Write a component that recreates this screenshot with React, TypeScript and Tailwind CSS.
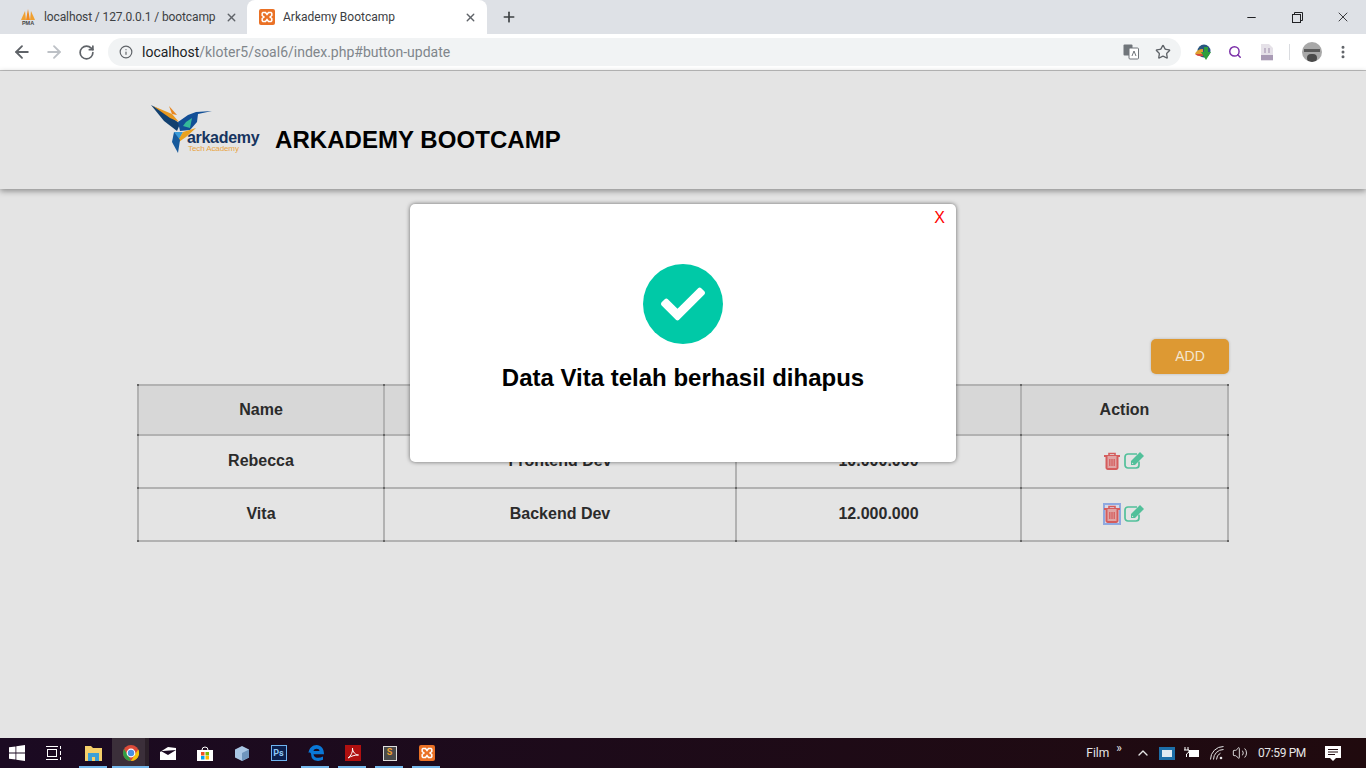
import { FaCheck } from 'react-icons/fa';
import { ArrowLeft, ArrowRight, RotateCw, Info, Star, Plus, X, Minus, MoreVertical, Search, ChevronUp, Volume2 } from 'lucide-react';

const rows = [
  { name: 'Rebecca', job: 'Frontend Dev', salary: '10.000.000', focused: false },
  { name: 'Vita', job: 'Backend Dev', salary: '12.000.000', focused: true },
];

function XamppIcon({ size = 16 }: { size?: number }) {
  return (
    <svg width={size} height={size} viewBox="0 0 16 16">
      <rect width="16" height="16" rx="2" fill="#ea7125" />
      <path d="M4 3.5h2.5L8 5.5l1.5-2H12l.8.8v2.2L11 8l1.800 1.500v2.200l-.8.800H9.500L8 10.500l-1.500 2H4l-.8-.8V9.500L5 8 3.200 6.500V4.300z" fill="none" stroke="#fff" strokeWidth="1.500" />
    </svg>
  );
}

function Logo() {
  return (
    <div className="relative w-[112px] h-[52px]">
      <svg width="64" height="50" viewBox="0 0 64 50" className="absolute left-0 top-0">
        <polygon points="1,1 18,10 30,20 27,27 14,17" fill="#12406f" />
        <polygon points="3,2 22,10 29,18 20,14" fill="#e8981f" />
        <polygon points="19,2 27,11 22,10" fill="#e8861f" />
        <polygon points="28,18 38,11 46,8 62,7 48,10 47,18 40,26 30,27" fill="#124f96" />
        <polygon points="36,18 42,14 40,24 33,22" fill="#35b99a" />
        <polygon points="24,28 33,28 27,40" fill="#3b9bd8" />
        <polygon points="33,28 46,24 36,33 26,40" fill="#e8a11f" />
        <polygon points="24,28 30,36 28,49 22,38" fill="#175a9c" />
      </svg>
      <span className="absolute left-[37px] top-[25px] text-[16px] leading-[18px] font-bold text-[#16345f] tracking-[-0.3px]">arkademy</span>
      <span className="absolute left-[38px] top-[40px] text-[8px] leading-[10px] text-[#e8a341] tracking-[-0.1px]">Tech Academy</span>
    </div>
  );
}

function TaskSlot({ children, mark = false, active = false }: { children: React.ReactNode; mark?: boolean; active?: boolean }) {
  return (
    <div className={`relative w-[37px] h-[30px] flex items-center justify-center ${active ? 'bg-[#3b2f3a]' : ''}`}>
      {children}
      {active && <div className="absolute right-0 top-0 bottom-0 w-[4px] bg-[#2b2029]" />}
      {mark && <div className={`absolute bottom-0 h-[2px] bg-[#76b9ed] ${active ? 'left-0 right-0' : 'left-[4px] right-[5px]'}`} />}
    </div>
  );
}

// dark dots where the table lines meet
function Cell({ children, right = false, bottom = false, head = false }: { children: React.ReactNode; right?: boolean; bottom?: boolean; head?: boolean }) {
  return (
    <td className="relative border-2 border-[#b2b2b2] text-center p-0">
      <i className="absolute left-[-2px] top-[-2px] w-[2px] h-[2px] bg-[#666]" />
      {right && <i className="absolute right-[-2px] top-[-2px] w-[2px] h-[2px] bg-[#666]" />}
      {bottom && <i className="absolute left-[-2px] bottom-[-2px] w-[2px] h-[2px] bg-[#666]" />}
      {bottom && right && <i className="absolute right-[-2px] bottom-[-2px] w-[2px] h-[2px] bg-[#666]" />}
      <div className={head ? '' : 'pb-[2px]'}>{children}</div>
    </td>
  );
}

export default function App() {
  return (
    <div className="relative w-[1366px] h-[768px] overflow-hidden flex flex-col bg-[#e4e4e4] font-['Liberation_Sans',Arial,sans-serif]">
      {/* tab strip */}
      <div className="h-[34px] bg-[#dee1e6] flex items-end shrink-0 relative">
        <div className="w-[247px] h-[34px] pl-[20px] pr-[9px] flex items-center">
          <svg width="16" height="16" viewBox="0 0 16 16" className="shrink-0">
            <polygon points="1,11 5,2 6,11" fill="#f0a030" />
            <polygon points="6,11 8,0 10,11" fill="#f08a20" />
            <polygon points="10,11 11,2 15,11" fill="#f0a030" />
            <text x="8" y="15.500" textAnchor="middle" fontSize="5.500" fontWeight="700" fill="#444" fontFamily="Liberation Sans">PMA</text>
          </svg>
          <span className="ml-[8px] text-[12px] text-[#3c4043] whitespace-nowrap font-['Roboto',sans-serif] tracking-[-0.12px]">localhost / 127.0.0.1 / bootcamp</span>
          <X size={13} className="ml-auto text-[#5f6368]" strokeWidth={2.500} />
        </div>
        <div className="w-[240px] h-[34px] bg-white rounded-t-[8px] pl-[12px] pr-[10px] flex items-center">
          <XamppIcon />
          <span className="ml-[8px] text-[12px] text-[#3c4043] font-['Roboto',sans-serif]">Arkademy Bootcamp</span>
          <X size={13} className="ml-auto text-[#5f6368]" strokeWidth={2.500} />
        </div>
        <Plus size={16} strokeWidth={2.500} className="ml-[14px] mb-[9px] text-[#3c4043]" />
        <div className="ml-auto h-[34px] flex items-center text-[#202124]">
          <div className="w-[46px] flex justify-center"><Minus size={13} /></div>
          <div className="w-[46px] flex justify-center">
            <svg width="11" height="11" viewBox="0 0 11 11" fill="none" stroke="#202124"><rect x="0.500" y="2.500" width="8" height="8" /><path d="M2.500 2.500v-2h8v8h-2" /></svg>
          </div>
          <div className="w-[46px] flex justify-center"><X size={16} strokeWidth={1.300} /></div>
        </div>
      </div>

      {/* toolbar */}
      <div className="h-[37px] bg-white border-b border-[#c0c0c0] flex items-center shrink-0">
        <ArrowLeft size={20} className="ml-[12px] text-[#5f6368]" strokeWidth={2.200} />
        <ArrowRight size={20} className="ml-[12px] text-[#bdc1c6]" strokeWidth={2.200} />
        <RotateCw size={17} className="ml-[14px] text-[#5f6368]" strokeWidth={2.400} />
        <div className="ml-[13px] w-[1073px] h-[28px] rounded-full bg-[#f1f3f4] flex items-center pl-[11px] pr-[10px]">
          <Info size={14} className="text-[#5f6368]" strokeWidth={2} />
          <span className="ml-[9px] text-[14px] text-[#80868b] font-['Roboto',sans-serif]"><span className="text-[#202124]">localhost</span>/kloter5/soal6/index.php#button-update</span>
          <svg width="16" height="16" viewBox="0 0 16 16" className="ml-auto mr-[16px]">
            <rect x="0.500" y="0.500" width="9" height="11" rx="1" fill="#70757a" />
            <rect x="6" y="4" width="9.500" height="11" rx="1" fill="#fff" stroke="#70757a" />
            <path d="M9 12l2-5 2 5" fill="none" stroke="#70757a" />
          </svg>
          <Star size={16} className="text-[#5f6368]" strokeWidth={2} />
        </div>
        <svg width="18" height="16" viewBox="0 0 18 16" className="ml-[13px]">
          <circle cx="10" cy="7" r="6.500" fill="#27557f" />
          <path d="M1 10a8 6 0 0 1 8-5v6z" fill="#e0a030" />
          <path d="M1 10a7 4 0 0 0 8 2v-2z" fill="#d24a3a" />
          <path d="M10 3h4v5h3l-5 8-5-8h3z" fill="#2f9e3c" />
        </svg>
        <Search size={14} strokeWidth={2.500} className="ml-[16px] text-[#7b2fa8]" />
        <svg width="14" height="17" viewBox="0 0 14 17" className="ml-[18px]">
          <path d="M1 0h8l4 4v13H1z" fill="#e5e1e8" />
          <rect x="1" y="11" width="12" height="5" fill="#a99bb5" />
          <path d="M5 4v5M9 4v5" stroke="#a99bb5" strokeWidth="1.200" />
        </svg>
        <div className="ml-[15px] w-px h-[16px] bg-[#dadce0]" />
        <div className="ml-[12px] w-[20px] h-[20px] rounded-full bg-[#a8a8a8] overflow-hidden flex flex-col items-center">
          <div className="mt-[7px] w-[16px] h-[3px] bg-[#5a5a5a]" />
          <div className="mt-[2px] w-[10px] h-[8px] rounded-full bg-[#4a4a4a]" />
        </div>
        <MoreVertical size={16} strokeWidth={2.500} className="ml-[13px] text-[#5f6368]" />
      </div>

      {/* page */}
      <div className="flex-1 relative flex flex-col">
        <header className="h-[118px] bg-[#e4e4e4] shadow-[0_2px_6px_rgba(0,0,0,0.4)] pl-[150px] pt-[33px] flex items-start">
          <Logo />
          <h1 className="ml-[13px] mt-[22px] text-[24px] leading-[28px] font-bold text-black tracking-[0.05px]">ARKADEMY BOOTCAMP</h1>
        </header>

        <main className="pl-[137px] pt-[150px] w-[1229px]">
          <div className="flex justify-end">
            <button className="w-[78px] h-[35px] rounded-[5px] bg-[#dd9933] text-[14px] text-[#f4e6d0] shadow-[0_0_3px_rgba(0,0,0,0.2)]">ADD</button>
          </div>
          <table className="mt-[10px] w-[1092px] border-collapse table-fixed text-[16px] font-bold text-[#2b2b2b]">
            <colgroup>
              <col className="w-[246px]" />
              <col className="w-[352px]" />
              <col className="w-[285px]" />
              <col className="w-[207px]" />
            </colgroup>
            <thead>
              <tr className="h-[50px] bg-[#d7d7d7]">
                <Cell head>Name</Cell>
                <Cell head>Job</Cell>
                <Cell head>Salary</Cell>
                <Cell head right>Action</Cell>
              </tr>
            </thead>
            <tbody>
              {rows.map((r, i) => (
                <tr key={r.name} className="h-[53px]">
                  <Cell bottom={i === 1}>{r.name}</Cell>
                  <Cell bottom={i === 1}>{r.job}</Cell>
                  <Cell bottom={i === 1}>{r.salary}</Cell>
                  <Cell right bottom={i === 1}>
                    <div className="flex justify-center items-center gap-[3px] pr-[1px]">
                      <span className={`w-[18px] h-[22px] flex items-center justify-center ${r.focused ? 'border-2 border-[#8fa9e0] bg-[#d9d9e6]' : ''}`}>
                        <svg width="16" height="18" viewBox="0 0 16 18" className="shrink-0" fill="none" stroke="#d55c5c">
                          <path d="M0 4h16" strokeWidth="2" />
                          <path d="M5 4V1.500h6V4" strokeWidth="1.600" />
                          <path d="M2.500 4v12a1.500 1.500 0 0 0 1.500 1h8a1.500 1.500 0 0 0 1.500-1V4" fill="#e0a5a5" strokeWidth="2" />
                          <path d="M5.800 7v7M8 7v7M10.200 7v7" strokeWidth="1.300" />
                        </svg>
                      </span>
                      <svg width="21" height="18" viewBox="0 0 21 18" className="shrink-0 mb-[2px]">
                        <path d="M15 10.500V14a3 3 0 0 1-3 3H4a3 3 0 0 1-3-3V6a3 3 0 0 1 3-3h9" fill="none" stroke="#52c09a" strokeWidth="1.700" />
                        <path d="M7 10l9-9 4 4-9 9H7z" fill="#52c09a" />
                        <path d="M8 11.500l1.500 1.500H8z" fill="#e4e4e4" />
                      </svg>
                    </div>
                  </Cell>
                </tr>
              ))}
            </tbody>
          </table>
        </main>

        {/* success modal */}
        <div className="absolute left-[410px] top-[133px] w-[546px] h-[258px] bg-white rounded-[5px] shadow-[0_0_4px_rgba(0,0,0,0.55)] flex flex-col items-center">
          <span className="absolute right-[11px] top-[5px] text-[16px] leading-[18px] text-[#ff0000]">X</span>
          <div className="mt-[60px] w-[80px] h-[80px] rounded-full bg-[#00c9a7] flex items-center justify-center">
            <FaCheck size={44} className="text-white" />
          </div>
          <p className="mt-[20px] text-[24px] leading-[28px] font-bold text-black">Data Vita telah berhasil dihapus</p>
        </div>
      </div>

      {/* taskbar */}
      <div className="h-[30px] bg-linear-to-r from-[#1b0a22] to-[#200a0e] flex items-center shrink-0 text-white font-['Roboto',sans-serif]">
        <div className="w-[36px] flex justify-center ml-[-1px]">
          <svg width="16" height="16" viewBox="0 0 16 16" fill="#fff"><path d="M0 2.300l6.500-.9v6.200H0zM7.300 1.300L16 0v7.600H7.300zM0 8.400h6.500v6.200L0 13.700zM7.300 8.400H16V16l-8.700-1.200z" /></svg>
        </div>
        <div className="w-[36px] flex justify-center">
          <svg width="17" height="16" viewBox="0 0 17 16" fill="none" stroke="#fff"><rect x="2.500" y="4.500" width="9" height="7" /><path d="M1 1.500h12M1 14.500h12M15.500 1v3M15.500 6v4M15.500 12v3" /></svg>
        </div>
        <div className="ml-[4px] flex">
          <TaskSlot mark>
            <svg width="17" height="15" viewBox="0 0 17 15"><path d="M0 0h6l2 2h9v13H0z" fill="#f4cf6a" /><rect x="3" y="7" width="11" height="8" fill="#3aa0d8" /><rect x="7" y="11" width="3" height="4" fill="#f4cf6a" /></svg>
          </TaskSlot>
          <TaskSlot mark active>
            <svg width="16" height="16" viewBox="0 0 16 16">
              <circle cx="8" cy="8" r="8" fill="#dd4b39" />
              <path d="M8 16a8 8 0 0 1-6.900-12L5 10.500z" fill="#2f9e44" />
              <path d="M8 16l3.800-6.500L15.300 4.500A8 8 0 0 1 8 16z" fill="#f4c20d" />
              <circle cx="8" cy="8" r="3.800" fill="#4a90e2" stroke="#fff" strokeWidth="1.200" />
            </svg>
          </TaskSlot>
          <TaskSlot>
            <svg width="16" height="13" viewBox="0 0 16 13"><path d="M0 5L8 0l8 1v12H0z" fill="#fff" /><path d="M0 3.500L8 8l8-5L3 4z" fill="#1b0a22" /></svg>
          </TaskSlot>
          <TaskSlot>
            <svg width="16" height="16" viewBox="0 0 16 16"><path d="M0 5h16v11H0z" fill="#fff" /><path d="M5 5a3 3 0 0 1 6 0" fill="none" stroke="#fff" /><rect x="4" y="7" width="3.500" height="3.500" fill="#f25022" /><rect x="8.500" y="7" width="3.500" height="3.500" fill="#7fba00" /><rect x="4" y="11" width="3.500" height="3.500" fill="#00a4ef" /><rect x="8.500" y="11" width="3.500" height="3.500" fill="#ffb900" /></svg>
          </TaskSlot>
          <TaskSlot>
            <svg width="14" height="15" viewBox="0 0 14 15"><path d="M7 0l7 3.500v8L7 15l-7-3.500v-8z" fill="#a9c6e4" /><path d="M7 7l7-3.500v8L7 15z" fill="#6f95bd" /></svg>
          </TaskSlot>
          <TaskSlot>
            <div className="w-[16px] h-[16px] border border-[#6fb4f0] bg-[#0b1f4d] text-[9px] leading-[14px] text-center text-[#8fc7f5] font-bold">Ps</div>
          </TaskSlot>
          <TaskSlot mark>
            <svg width="16" height="16" viewBox="0 0 16 16"><path d="M.5 8C1 3 4.500 0 8.500 0 13 0 16 3.500 16 9.200H5.500c.2 3.800 5.500 4.800 9.500 2.300v3.300c-5 2.400-11.500 1-11.700-4.300C3.200 8 2 7 .5 8zm5-2h6c0-3-5.500-3-6 0z" fill="#0a78d7" fillRule="evenodd" /></svg>
          </TaskSlot>
          <TaskSlot mark>
            <div className="w-[16px] h-[16px] bg-[#b01010] flex items-center justify-center">
              <svg width="12" height="12" viewBox="0 0 12 12" fill="none" stroke="#fff"><path d="M1 11c3-2 5-6 4.500-10 0 4 3 7 6 7-4 0-7 1-10.500 3z" /></svg>
            </div>
          </TaskSlot>
          <TaskSlot mark>
            <div className="w-[14px] h-[15px] bg-[#4a4a4a] border border-[#ddd] text-[9px] leading-[11px] text-center text-[#f0a030] font-bold">S</div>
          </TaskSlot>
          <TaskSlot mark>
            <XamppIcon />
          </TaskSlot>
        </div>
        <div className="ml-auto flex items-center text-[#e6e6e6]">
          <span className="text-[12px]">Film</span>
          <span className="ml-[7px] mt-[-10px] text-[12px] leading-[10px]">»</span>
          <ChevronUp size={16} className="ml-[13px]" />
          <div className="ml-[8px] w-[16px] h-[13px] bg-[#1c6ea8] flex items-center justify-center">
            <div className="w-[10px] h-[7px] bg-[#dfeaf2]" />
          </div>
          <svg width="16" height="12" viewBox="0 0 16 12" className="ml-[8px]" fill="none" stroke="#fff"><path d="M2 0v3M5 0v3M1 3h5v2L3.500 7v3" /><rect x="6.500" y="3.500" width="9" height="6" fill="#fff" /></svg>
          <svg width="14" height="14" viewBox="0 0 14 14" className="ml-[11px]" fill="none" stroke="#e6e6e6">
            <path d="M.5 13.500a13 13 0 0 1 13-13M3.500 13.500a10 10 0 0 1 10-10M6.500 13.500a7 7 0 0 1 4-6.300" />
            <circle cx="11" cy="12" r="1.300" fill="#e6e6e6" stroke="none" />
          </svg>
          <Volume2 size={16} strokeWidth={1.400} className="ml-[8px]" />
          <span className="ml-[10px] text-[12px] tracking-[-0.35px]">07:59 PM</span>
          <div className="ml-[19px] mr-[25px]">
            <svg width="16" height="15" viewBox="0 0 16 15"><path d="M0 0h16v12h-5l-3 3-3-3H0z" fill="#fff" /><path d="M3 3.500h10M3 6h10M3 8.500h7" stroke="#200a0e" /></svg>
          </div>
        </div>
      </div>
    </div>
  );
}
